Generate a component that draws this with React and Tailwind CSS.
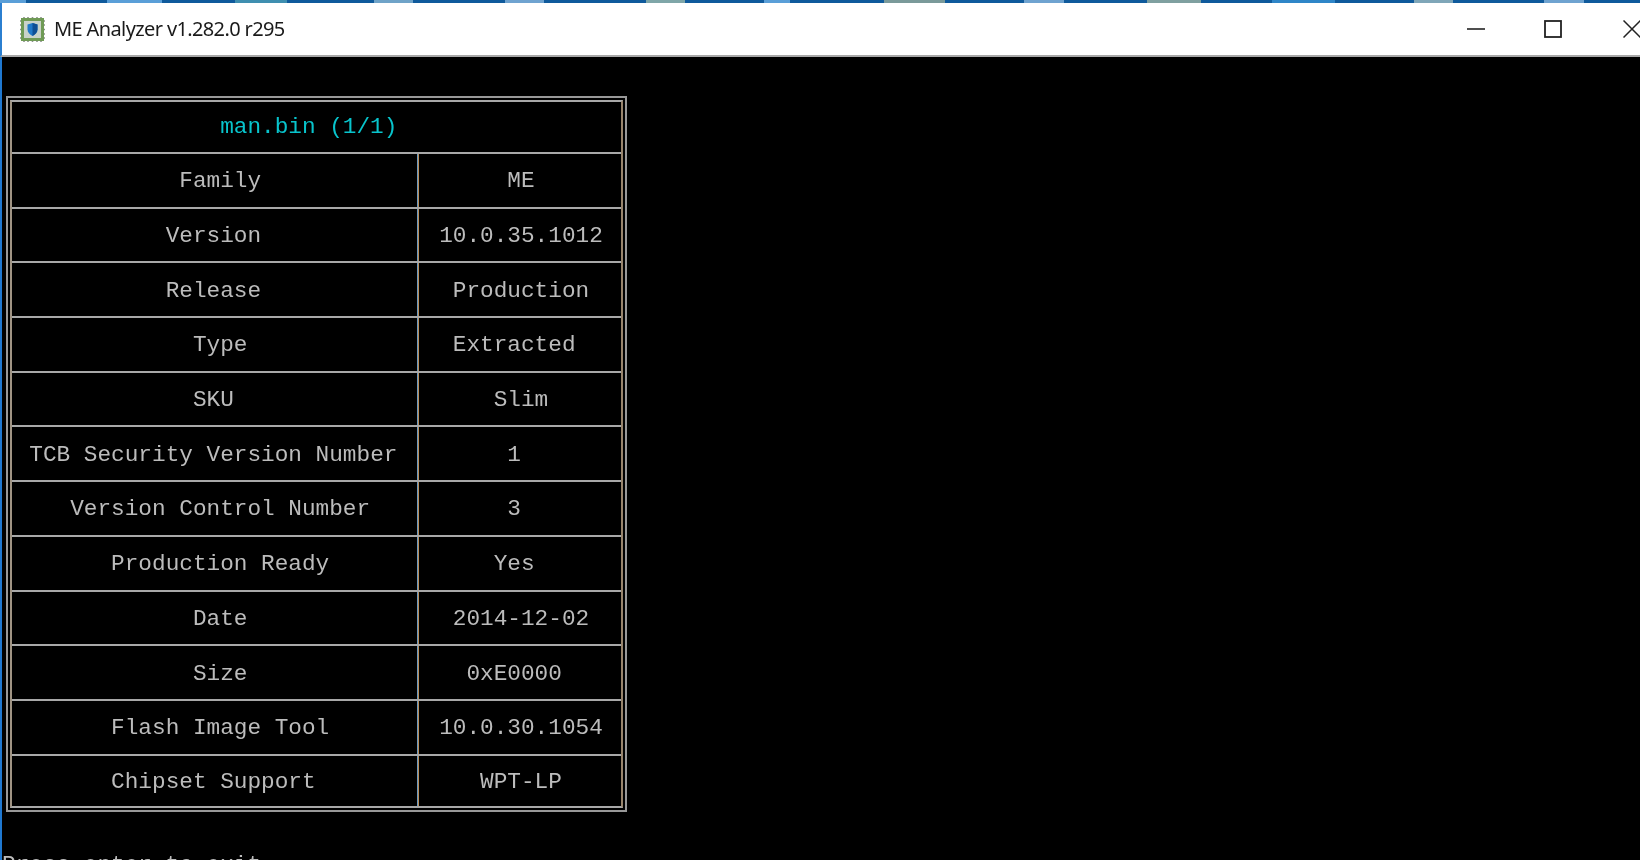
const segments = [
  ['w-[26px]', 'bg-[#5a9fd8]'], ['w-[81px]', 'bg-[#0f5a9c]'], ['w-[55px]', 'bg-[#5a9fd8]'], ['w-[73px]', 'bg-[#0f5a9c]'],
  ['w-[52px]', 'bg-[#3f8fb0]'], ['w-[87px]', 'bg-[#0f5a9c]'], ['w-[39px]', 'bg-[#6fa3c8]'], ['w-[92px]', 'bg-[#0f5a9c]'],
  ['w-[39px]', 'bg-[#6fa3d0]'], ['w-[102px]', 'bg-[#0f5a9c]'], ['w-[39px]', 'bg-[#7fa6a8]'], ['w-[79px]', 'bg-[#0f5a9c]'],
  ['w-[26px]', 'bg-[#5a9fd8]'], ['w-[94px]', 'bg-[#0f5a9c]'], ['w-[61px]', 'bg-[#7a9a9a]'], ['w-[79px]', 'bg-[#0f5a9c]'],
  ['w-[40px]', 'bg-[#6fa3d0]'], ['w-[83px]', 'bg-[#0f5a9c]'], ['w-[54px]', 'bg-[#7fa0a0]'], ['w-[71px]', 'bg-[#0f5a9c]'],
  ['w-[63px]', 'bg-[#2f86c8]'], ['w-[79px]', 'bg-[#0f5a9c]'], ['w-[39px]', 'bg-[#7fa6b8]'], ['w-[91px]', 'bg-[#0f5a9c]'],
  ['w-[40px]', 'bg-[#6fa3d0]'], ['flex-1', 'bg-[#0f5a9c]'],
];

const rows = [
  ['Family', 'ME'],
  ['Version', '10.0.35.1012'],
  ['Release', 'Production'],
  ['Type', 'Extracted'],
  ['SKU', 'Slim'],
  ['TCB Security Version Number', '1'],
  ['Version Control Number', '3'],
  ['Production Ready', 'Yes'],
  ['Date', '2014-12-02'],
  ['Size', '0xE0000'],
  ['Flash Image Tool', '10.0.30.1054'],
  ['Chipset Support', 'WPT-LP'],
];

// same rounding as python's str.center, the console columns depend on it
const leadingSpaces = (text, width) => {
  const pad = width - text.length;
  return Math.floor(pad / 2) + (pad & width & 1);
};

function ChipIcon() {
  return (
    <svg width="27" height="27" viewBox="0 0 27 27">
      <path d="M5 1v25M9 1v25M13.5 1v25M18 1v25M22 1v25M1 5h25M1 9h25M1 13.5h25M1 18h25M1 22h25" stroke="#8b8f8b" strokeWidth="1.6" />
      <rect x="3.5" y="3.5" width="20" height="20" fill="#c9d2c9" stroke="#6f9a55" strokeWidth="3" />
      <path d="M13.5 7l5 1.6v5c0 3-2.2 5-5 6.4-2.8-1.4-5-3.4-5-6.4v-5z" fill="#1f78c8" />
      <path d="M13.5 7l5 1.6v5c0 3-2.2 5-5 6.4z" fill="#0f4f94" />
    </svg>
  );
}

function WindowButtons() {
  return (
    <div className="ml-auto flex items-center gap-[59px] mr-[-1px]">
      <svg width="18" height="18" viewBox="0 0 18 18">
        <path d="M0 9h18" stroke="#222" strokeWidth="1.6" />
      </svg>
      <svg width="18" height="18" viewBox="0 0 18 18">
        <rect x="1" y="1" width="16" height="16" fill="none" stroke="#222" strokeWidth="1.8" />
      </svg>
      <svg className="ml-[2px]" width="18" height="18" viewBox="0 0 18 18">
        <path d="M0.5 0.5l17 17M17.5 0.5l-17 17" stroke="#222" strokeWidth="1.5" />
      </svg>
    </div>
  );
}

export default function App() {
  return (
    <div className="h-[860px] w-[1640px] overflow-hidden bg-black flex flex-col">
      <div className="flex h-[3px] shrink-0">
        {segments.map(([width, color], i) => (
          <div key={i} className={`${width} ${color}`}></div>
        ))}
      </div>

      {/* Title bar */}
      <div className="h-[54px] shrink-0 bg-white border-b-[2px] border-[#a8a8a8] border-l-2 border-l-[#2b7fd0] flex items-center pl-[17px] overflow-hidden">
        <div className="blur-[0.5px]">
          <ChipIcon />
        </div>
        <span className="ml-[8px] text-[20px] tracking-[-0.62px] text-[#1a1a1a] blur-[0.3px] font-['Noto_Sans',sans-serif]">ME Analyzer v1.282.0 r295</span>
        <WindowButtons />
      </div>

      {/* Console */}
      <div className="flex-1 border-l-2 border-[#1f78d0] font-['Liberation_Mono',monospace] text-[22.72px] leading-[26px] text-[#bcbcbc] whitespace-pre">
        <div className="blur-[0.35px]">
          <div className="ml-[4px] mt-[39px] w-[621px] border-2 border-[#989898] p-[2px]">
            <div className="border-2 border-[#a8a8a8] border-l-[#a09484] border-r-[#98846c]">
              <div className="h-[52px] border-b-2 border-[#a8a8a8] flex items-center pl-[17.3px] text-[#08c4cc]">
                <span style={{ paddingLeft: '14ch' }}>man.bin (1/1)</span>
              </div>
              {rows.map(([label, value], i) => (
                <div
                  key={label}
                  className={i === rows.length - 1 ? 'h-[50px] flex' : 'h-[54.7px] flex border-b-2 border-[#a8a8a8]'}
                >
                  <div className="w-[406px] border-r border-[#6d9abf] flex items-center pl-[17.3px] pt-[2px]">
                    <span style={{ paddingLeft: `${leadingSpaces(label, 27)}ch` }}>{label}</span>
                  </div>
                  <div className="flex-1 border-l border-[#b98f5c] flex items-center pl-[20.2px] pt-[2px]">
                    <span style={{ paddingLeft: `${leadingSpaces(value, 12)}ch` }}>{value}</span>
                  </div>
                </div>
              ))}
            </div>
          </div>
          <div className="mt-[40px]">Press enter to exit</div>
        </div>
      </div>
    </div>
  );
}
